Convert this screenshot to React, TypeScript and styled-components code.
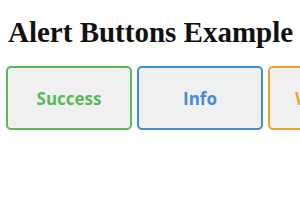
import styled, { createGlobalStyle } from 'styled-components';

type Kind = 'success' | 'info' | 'warning';

const colors: Record<Kind, string> = {
  success: '#5cb85c',
  info: '#3d8fd8',
  warning: '#f0a030',
};

const GlobalStyle = createGlobalStyle`
  body {
    margin: 0;
    background: #ffffff;
    overflow: hidden;
  }
`;

const Page = styled.div`
  padding: 0 6px;
`;

const Title = styled.h1`
  margin: 0;
  padding: 16px 0 0 2px;
  font-family: 'Liberation Serif', 'Times New Roman', serif;
  font-size: 29px;
  font-weight: bold;
  color: #111;
  line-height: 33px;
`;

const ButtonRow = styled.div`
  display: flex;
  gap: 5px;
  margin-top: 17px;
  width: 400px;
`;

const AlertButton = styled.button<{ $kind: Kind }>`
  flex: 0 0 auto;
  width: 126px;
  height: 64px;
  border: 2px solid ${(props) => colors[props.$kind]};
  border-radius: 5px;
  background-color: #f0f0f0;
  color: ${(props) => colors[props.$kind]};
  font-family: 'Open Sans', sans-serif;
  font-size: 17px;
  font-weight: bold;
  cursor: pointer;
`;

const App = () => {
  return (
    <Page>
      <GlobalStyle />
      <Title>Alert Buttons Example</Title>
      <ButtonRow>
        <AlertButton $kind="success">Success</AlertButton>
        <AlertButton $kind="info">Info</AlertButton>
        <AlertButton $kind="warning">Warning</AlertButton>
      </ButtonRow>
    </Page>
  );
};

export default App;
